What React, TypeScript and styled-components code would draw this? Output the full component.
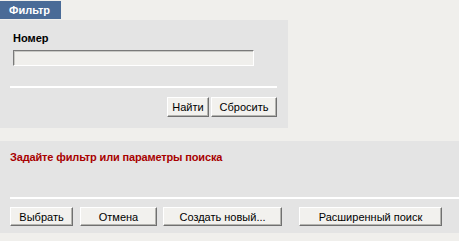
import React from "react";
import styled, { createGlobalStyle } from "styled-components";

const GlobalStyle = createGlobalStyle`
    body {
        margin: 0;
        background: #f0efec;
        font-family: Tahoma, "Liberation Sans", Arial, sans-serif;
        font-size: 11px;
        color: #000;
    }
`;

const Page = styled.div`
    width: 459px;
    height: 241px;
    overflow: hidden;
`;

const Tab = styled.div`
    display: flex;
    align-items: center;
    width: 52px;
    height: 18px;
    margin-top: 1px;
    padding-left: 9px;
    background: #4a6b97;
    color: #fff;
    font-weight: bold;
    font-size: 11px;
`;

const FilterPanel = styled.div`
    display: flex;
    flex-direction: column;
    width: 288px;
    box-sizing: border-box;
    margin-top: 1px;
    padding: 11px 11px 11px 0;
    background: #e4e4e4;
`;

const Label = styled.div`
    margin-left: 13px;
    font-weight: bold;
    line-height: 14px;
`;

const TextInput = styled.input`
    box-sizing: border-box;
    width: 241px;
    height: 16px;
    margin: 5px 0 0 13px;
    padding: 0 2px;
    border: 1px solid;
    border-color: #7a7a7a #ffffff #ffffff #7a7a7a;
    box-shadow: inset 1px 1px 0 #c8c8c4;
    background: #f0efec;
    outline: none;
`;

const Separator = styled.div<{ $mt: number }>`
    height: 2px;
    margin: ${(p) => p.$mt}px 0 0 10px;
    background: #ffffff;
`;

const ButtonRow = styled.div<{ $end?: boolean; $mt: number }>`
    display: flex;
    justify-content: ${(p) => (p.$end ? "flex-end" : "flex-start")};
    margin-top: ${(p) => p.$mt}px;
    padding-left: ${(p) => (p.$end ? 0 : 10)}px;
`;

const Button = styled.button<{ $w: number; $ml?: number; $h?: number }>`
    box-sizing: border-box;
    width: ${(p) => p.$w}px;
    height: ${(p) => p.$h ?? 20}px;
    margin-left: ${(p) => p.$ml ?? 0}px;
    padding: 0;
    font-family: inherit;
    font-size: 11px;
    color: #000;
    background: #f2f1ee;
    border: 1px solid;
    border-color: #ffffff #707070 #707070 #ffffff;
    box-shadow: inset -1px -1px 0 #b4b4b0;
    cursor: pointer;
`;

const ResultsPanel = styled.div`
    display: flex;
    flex-direction: column;
    margin-top: 13px;
    padding: 9px 0 7px;
    background: #e4e4e4;
`;

const Message = styled.div`
    margin-left: 10px;
    color: #a80000;
    font-weight: bold;
    line-height: 14px;
    letter-spacing: -0.15px;
`;

export default function App() {
    return (
        <Page>
            <GlobalStyle />
            <Tab>Фильтр</Tab>
            <FilterPanel>
                <Label>Номер</Label>
                <TextInput type="text" />
                <Separator $mt={20} />
                <ButtonRow $end $mt={9}>
                    <Button $w={42}>Найти</Button>
                    <Button $w={66} $ml={2}>Сбросить</Button>
                </ButtonRow>
            </FilterPanel>
            <ResultsPanel>
                <Message>Задайте фильтр или параметры поиска</Message>
                <Separator $mt={33} />
                <ButtonRow $mt={8}>
                    <Button $w={63} $h={19}>Выбрать</Button>
                    <Button $w={77} $h={19} $ml={7}>Отмена</Button>
                    <Button $w={119} $h={19} $ml={6}>Создать новый...</Button>
                    <Button $w={143} $h={19} $ml={17}>Расширенный поиск</Button>
                </ButtonRow>
            </ResultsPanel>
        </Page>
    );
}
